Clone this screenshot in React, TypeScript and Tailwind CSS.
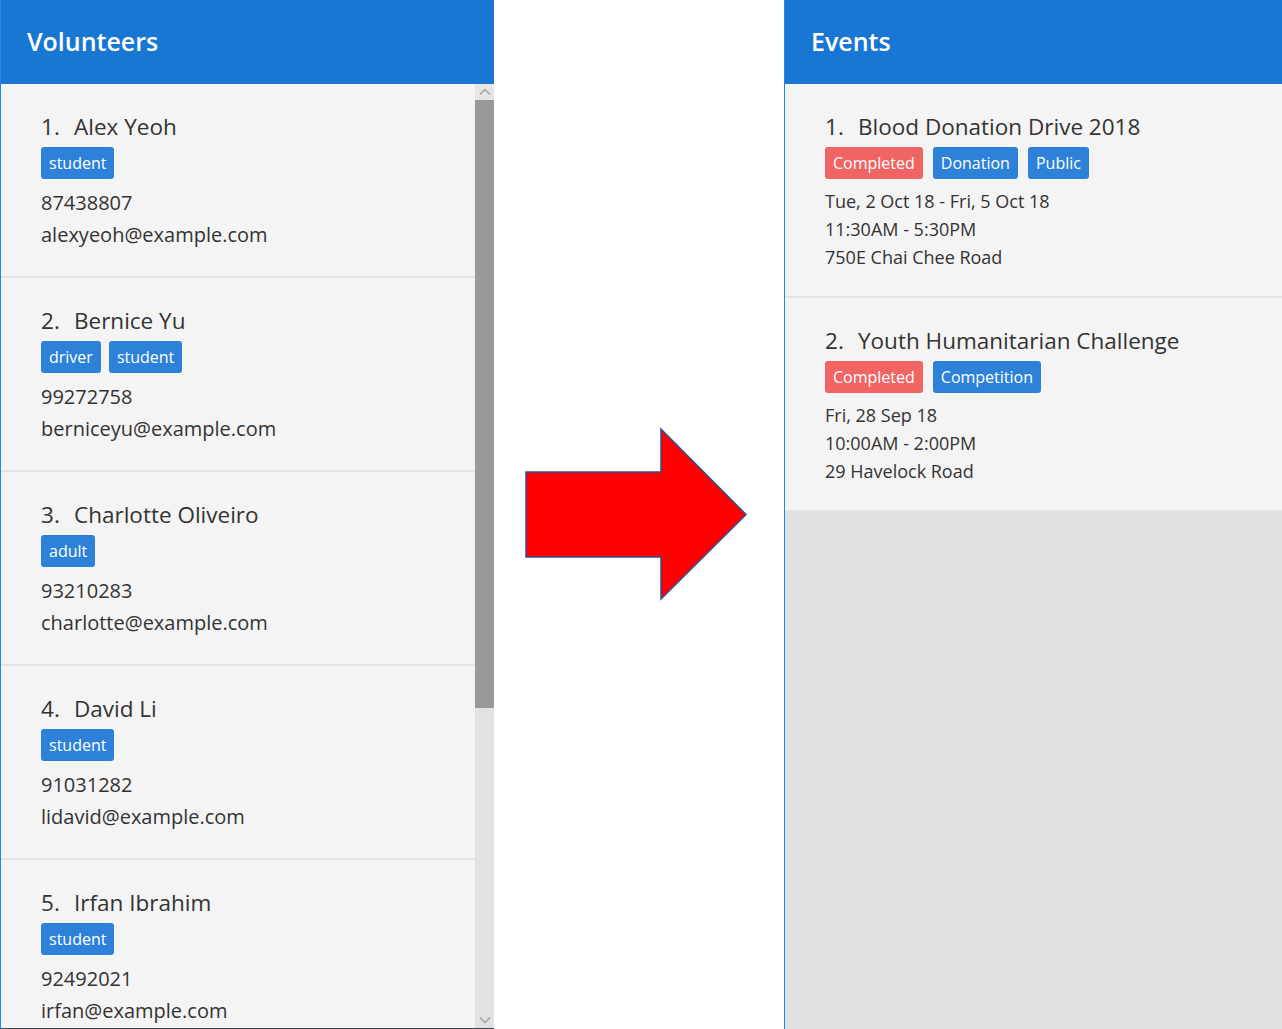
import React from "react";

const font = { fontFamily: '"Open Sans", "Noto Sans", sans-serif' };

type Vol = { name: string; tags: string[]; phone: string; email: string };
const vols: Vol[] = [
  { name: "Alex Yeoh", tags: ["student"], phone: "87438807", email: "alexyeoh@example.com" },
  { name: "Bernice Yu", tags: ["driver", "student"], phone: "99272758", email: "berniceyu@example.com" },
  { name: "Charlotte Oliveiro", tags: ["adult"], phone: "93210283", email: "charlotte@example.com" },
  { name: "David Li", tags: ["student"], phone: "91031282", email: "lidavid@example.com" },
  { name: "Irfan Ibrahim", tags: ["student"], phone: "92492021", email: "irfan@example.com" },
];

type Ev = { name: string; tags: string[]; date: string; time: string; addr: string };
const evs: Ev[] = [
  { name: "Blood Donation Drive 2018", tags: ["Donation", "Public"], date: "Tue, 2 Oct 18 - Fri, 5 Oct 18", time: "11:30AM - 5:30PM", addr: "750E Chai Chee Road" },
  { name: "Youth Humanitarian Challenge", tags: ["Competition"], date: "Fri, 28 Sep 18", time: "10:00AM - 2:00PM", addr: "29 Havelock Road" },
];

function Tag({ label, red }: { label: string; red?: boolean }) {
  return (
    <span
      className={
        "inline-flex h-[32px] items-center rounded-[3px] px-[8px] text-[16px] text-white " +
        (red ? "bg-[#f06464]" : "bg-[#2e81d8]")
      }
    >
      {label}
    </span>
  );
}

export default function App() {
  return (
    <div className="flex h-[1029px] w-[1282px] overflow-hidden bg-white text-[#333]" style={font}>
      {/* Volunteers panel */}
      <div className="flex h-full w-[494px] flex-col border-l border-b border-l-[#1e88e5] border-b-[#3a4654]">
        <div className="flex h-[84px] shrink-0 items-center bg-[#1976d2] pl-[26px] text-[25px] font-semibold text-white">
          Volunteers
        </div>
        <div className="flex min-h-0 flex-1">
          <div className="flex-1 overflow-hidden bg-[#f4f4f4]">
            {vols.map((v, i) => (
              <div key={i} className="h-[194px] shrink-0 border-b-2 border-[#e4e4e4] pl-[40px] pt-[27px]">
                <div className="flex h-[32px] items-center text-[22.5px] leading-[32px]">
                  <span className="w-[33px]">{i + 1}.</span>
                  <span>{v.name}</span>
                </div>
                <div className="mt-[4px] flex gap-[8px]">
                  {v.tags.map((t) => (
                    <Tag key={t} label={t} />
                  ))}
                </div>
                <div className="mt-[8px] text-[20px] leading-[32px]">{v.phone}</div>
                <div className="text-[20px] leading-[32px]">{v.email}</div>
              </div>
            ))}
          </div>
          <div className="flex w-[19px] shrink-0 flex-col bg-[#e2e2e2]">
            <div className="flex h-[16px] items-center justify-center bg-[#e6e6e6]">
              <svg width="12" height="8" viewBox="0 0 12 8">
                <path d="M1 6.5 L6 1.5 L11 6.5" fill="none" stroke="#a0a0a0" strokeWidth="1.4" />
              </svg>
            </div>
            <div className="h-[608px] bg-[#999999]" />
            <div className="flex-1" />
            <div className="flex h-[16px] items-center justify-center">
              <svg width="12" height="8" viewBox="0 0 12 8">
                <path d="M1 1.5 L6 6.5 L11 1.5" fill="none" stroke="#a0a0a0" strokeWidth="1.4" />
              </svg>
            </div>
          </div>
        </div>
      </div>

      {/* Arrow */}
      <div className="flex w-[290px] shrink-0 items-start">
        <svg width="290" height="1029" viewBox="494 0 290 1029">
          <polygon
            points="526,472 661,472 661,429 746,514.5 661,599 661,557 526,557"
            fill="#ff0000"
            stroke="#2f4f8f"
            strokeWidth="1.5"
          />
        </svg>
      </div>

      {/* Events panel */}
      <div className="flex h-full flex-1 flex-col border-l border-[#1e88e5]">
        <div className="flex h-[84px] shrink-0 items-center bg-[#1976d2] pl-[26px] text-[25px] font-semibold text-white">
          Events
        </div>
        <div className="flex-1 bg-[#e0e0e0]">
          {evs.map((e, i) => (
            <div key={i} className="h-[214px] border-b-2 border-[#e4e4e4] bg-[#f4f4f4] pl-[40px] pt-[27px]">
              <div className="flex h-[32px] items-center text-[22.5px] leading-[32px]">
                <span className="w-[33px]">{i + 1}.</span>
                <span>{e.name}</span>
              </div>
              <div className="mt-[4px] flex gap-[10px]">
                <Tag label="Completed" red />
                {e.tags.map((t) => (
                  <Tag key={t} label={t} />
                ))}
              </div>
              <div className="mt-[8px] text-[18px] leading-[28px]">{e.date}</div>
              <div className="text-[18px] leading-[28px]">{e.time}</div>
              <div className="text-[18px] leading-[28px]">{e.addr}</div>
            </div>
          ))}
        </div>
      </div>
    </div>
  );
}
